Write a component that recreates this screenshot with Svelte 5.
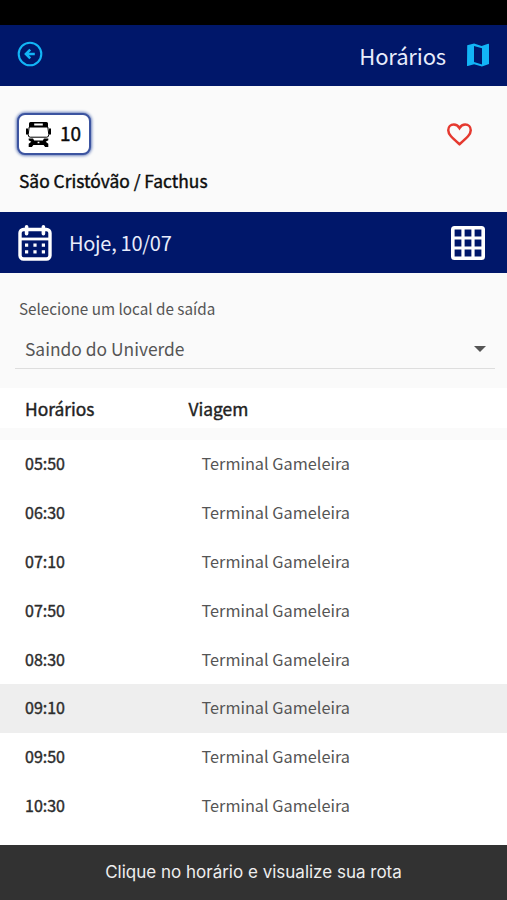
<script>
  let selected = $state("09:10");

  const destination = "Terminal Gameleira";
  const times = [
    "05:50",
    "06:30",
    "07:10",
    "07:50",
    "08:30",
    "09:10",
    "09:50",
    "10:30",
  ];
</script>

<div class="app">
  <div class="status-bar"></div>

  <header class="toolbar">
    <svg class="back" viewBox="0 0 26 26" fill="none" stroke="currentColor">
      <circle cx="13" cy="13" r="11.3" stroke-width="2.1" />
      <path d="M17.8 13H9M13.2 8.7L8.9 13l4.300 4.300" stroke-width="2.5" />
    </svg>
    <h1>Horários</h1>
    <!-- MAP -->
    <svg class="map" viewBox="0 0 24 24" fill="currentColor">
      <path
        fill-rule="evenodd"
        d="M1.2 2.300L8.100.6l7.500 2.400L22.200.8q.8-.2.800.6v19.700L15.900 23.500l-7.800-2.300L1.800 23q-.8.2-.8-.6zM8 3v16l8 2.500V5.300z"
      />
    </svg>
  </header>

  <section class="line">
    <div class="line-top">
      <div class="badge">
        <!-- BUS -->
        <svg class="bus" viewBox="0 0 25 25">
          <path
            fill-rule="evenodd"
            d="M4.500 0h16q1.500 0 1.500 1.500v4H3v-4Q3 0 4.500 0zM8.200 1.600v2h8.600v-2z"
          />
          <path d="M3.200 5L2.200 12.500q0 2.700 2 2.700h16.600q2 0 2-2.700L21.800 5" fill="none" stroke="#000" stroke-width="1" />
          <path d="M0 6.500h2.100v6H0zM22.900 6.500H25v6h-2.100z" />
          <path
            fill-rule="evenodd"
            d="M2.700 16.500h4.300l1.200 2h8.600l1.200-2h4.300v1.700l-2.600 1.600 2.600 1.900V25h-3.200l-1.500-2H7.400l-1.500 2H2.700v-3.300l2.600-1.900-2.600-1.600zM11.600 19.800v1.500h1.800v-1.500z"
          />
        </svg>
        <span>10</span>
      </div>
      <svg class="heart" viewBox="0 0 24 22" fill="none" stroke="currentColor">
        <path
          d="M12 20.300C5 14.200 1.200 11 1.200 6.900 1.200 3.800 3.500 1.500 6.500 1.500c2.200 0 4.200 1.200 5.500 3.300 1.300-2.100 3.300-3.300 5.500-3.300 3 0 5.300 2.300 5.300 5.400 0 4.100-3.800 7.300-10.800 13.400z"
          stroke-width="2.4"
        />
      </svg>
    </div>
    <div class="line-name">São Cristóvão / Facthus</div>
  </section>

  <div class="date-bar">
    <!-- CALENDAR -->
    <svg class="calendar" viewBox="0 0 34 36" fill="none" stroke="currentColor">
      <rect x="2" y="4.5" width="30" height="29.5" rx="3.5" stroke-width="3.4" />
      <path d="M2 14h30" stroke-width="2.8" />
      <path d="M8.600 1.800v7M25.400 1.800v7" stroke-width="3.6" stroke-linecap="round" />
      <path
        d="M7 20.200h3.200M15.400 20.200h3.200M23.800 20.200H27M7 26.800h3.200M15.400 26.800h3.200M23.800 26.800H27"
        stroke-width="3.2"
      />
    </svg>
    <span>Hoje, 10/07</span>
    <!-- GRID -->
    <svg class="grid" viewBox="0 0 34 34" fill="currentColor">
      <path
        fill-rule="evenodd"
        d="M3.500 0h27Q34 0 34 3.500v27q0 3.500-3.500 3.500h-27Q0 34 0 30.500v-27Q0 0 3.500 0zM3.600 3.600v6.800h6.800V3.600zM13.600 3.600v6.800h6.800V3.600zM23.600 3.600v6.800h6.800V3.600zM3.600 13.600v6.800h6.800v-6.800zM13.600 13.600v6.800h6.800v-6.800zM23.600 13.600v6.800h6.800v-6.800zM3.600 23.600v6.800h6.800v-6.800zM13.600 23.600v6.800h6.800v-6.800zM23.600 23.600v6.800h6.800v-6.800z"
      />
    </svg>
  </div>

  <section class="departure">
    <div class="departure-label">Selecione um local de saída</div>
    <div class="select">
      <span>Saindo do Univerde</span>
      <i class="caret"></i>
    </div>
  </section>

  <div class="table-head">
    <span>Horários</span>
    <span>Viagem</span>
  </div>

  <div class="rows">
    {#each times as time}
      <button
        class="row"
        class:active={time === selected}
        onclick={() => (selected = time)}
      >
        <span class="time">{time}</span>
        <span class="trip">{destination}</span>
      </button>
    {/each}
  </div>

  <footer class="hint">Clique no horário e visualize sua rota</footer>
</div>

<style>
  :global(body) {
    background: #fff;
  }

  .app {
    width: 507px;
    height: 900px;
    display: flex;
    flex-direction: column;
    overflow: hidden;
    background: #fff;
    color: #222;
    font-family: "Noto Sans CJK SC", "Noto Sans", sans-serif;
  }

  .app > * {
    box-sizing: border-box;
    flex-shrink: 0;
  }

  svg {
    display: block;
    flex-shrink: 0;
  }

  .status-bar {
    height: 25px;
    background: #000;
  }

  /* TOOLBAR */
  .toolbar {
    height: 61px;
    display: flex;
    align-items: center;
    padding: 0 17px;
    background: #00176a;
    color: #12b5f6;
  }

  .back {
    width: 26px;
    height: 26px;
    margin-top: -3px;
  }

  h1 {
    margin: -2px 20px 0 auto;
    font-size: 22px;
    font-weight: 400;
    letter-spacing: -0.15px;
    line-height: 30px;
    color: #e8ecfb;
  }

  .map {
    width: 24px;
    height: 24px;
    margin-top: -2px;
  }

  /* LINE */
  .line {
    height: 126px;
    padding: 27px 35px 0 17px;
    background: #fafafa;
    color: #0c0c0c;
  }

  .line-top {
    display: flex;
    align-items: center;
    justify-content: space-between;
  }

  .badge {
    box-sizing: border-box;
    width: 74px;
    height: 42px;
    display: flex;
    align-items: center;
    gap: 9px;
    padding-left: 7px;
    border: 2px solid #3c54a0;
    border-radius: 8px;
    background: #fff;
    box-shadow: 0 0 3px 1px #6d83bd;
    font-size: 19px;
    line-height: 28px;
    -webkit-text-stroke: 0.4px;
  }

  .badge span {
    margin-top: -2px;
  }

  .bus {
    width: 25px;
    height: 25px;
  }

  .heart {
    width: 25px;
    height: 23px;
    color: #e5392f;
  }

  .line-name {
    margin: 13px 0 0 2px;
    font-size: 17.4px;
    line-height: 26px;
    -webkit-text-stroke: 0.4px;
  }

  /* DATE */
  .date-bar {
    height: 61px;
    display: flex;
    align-items: center;
    padding: 0 22px 0 18px;
    background: #00176a;
    color: #fff;
    font-size: 20px;
    letter-spacing: -0.28px;
    line-height: 30px;
  }

  .date-bar span {
    margin-left: 17px;
    color: #e8ecfb;
  }

  .calendar {
    width: 34px;
    height: 36px;
  }

  .grid {
    width: 34px;
    height: 34px;
    margin-left: auto;
  }

  /* SELECT */
  .departure {
    height: 115px;
    padding: 23px 12px 0 15px;
    background: #fafafa;
    color: #555;
  }

  .departure-label {
    padding-left: 4px;
    font-size: 15.25px;
    line-height: 24px;
  }

  .select {
    box-sizing: border-box;
    height: 49px;
    display: flex;
    align-items: center;
    justify-content: space-between;
    padding: 9px 9px 0 10px;
    border-bottom: 1px solid #dedede;
    font-size: 17.4px;
    line-height: 26px;
  }

  .caret {
    border: 6px solid transparent;
    border-top-color: #555;
    border-bottom: 0;
  }

  /* TABLE */
  .table-head {
    height: 52px;
    display: grid;
    grid-template-columns: 163.5px 1fr;
    padding: 8px 0 0 25px;
    border-bottom: 12px solid #fafafa;
    font-size: 17.4px;
    line-height: 26px;
    -webkit-text-stroke: 0.4px;
  }

  .rows {
    height: 405px;
  }

  .row {
    width: 100%;
    height: 48.8px;
    display: grid;
    grid-template-columns: 176.5px 1fr;
    align-items: center;
    padding: 0 0 2px 25px;
    border: 0;
    background: none;
    color: #2c2c2c;
    font: inherit;
    font-size: 16px;
    line-height: 24px;
    text-align: left;
  }

  .row.active {
    background: #eee;
  }

  .time {
    -webkit-text-stroke: 0.4px;
  }

  .trip {
    color: #555;
    font-size: 16.3px;
  }

  /* HINT */
  .hint {
    height: 55px;
    padding-top: 15px;
    background: #323232;
    color: #eee;
    font-family: Inter, Roboto, sans-serif;
    font-size: 17px;
    line-height: 24px;
    text-align: center;
  }
</style>
